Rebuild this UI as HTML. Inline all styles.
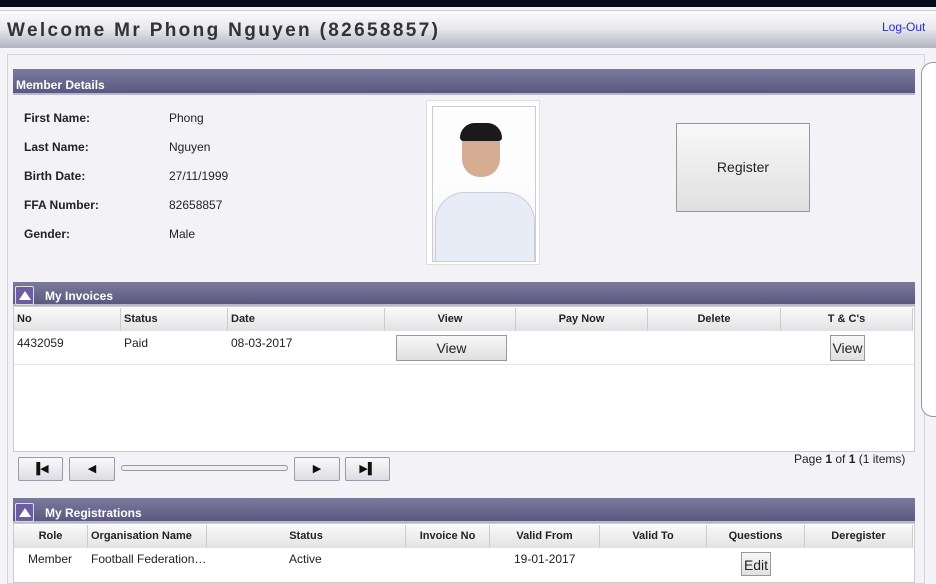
<!DOCTYPE html>
<html><head><style>
*{margin:0;padding:0;box-sizing:border-box}
body{width:936px;height:573px;overflow:hidden;background:#f4f4f8;font-family:"Liberation Sans",sans-serif;position:relative;font-size:12px;color:#222}
.a{position:absolute}
.bar{position:absolute;left:13px;width:902px;background:linear-gradient(#7c7a9c,#5a5880);color:#fff;font-weight:bold;font-size:12px;border-bottom:2px solid #b8b8cc}
.hd{position:absolute;height:23px;background:linear-gradient(#fafafa,#e2e2e6);border-right:1px solid #ccc;font-weight:bold;font-size:11px;line-height:22px;text-align:center}
.btn{position:absolute;background:linear-gradient(#f8f8f8,#e0e0e0);border:1px solid #999;text-align:center}
.pg{position:absolute;top:457px;height:24px;background:linear-gradient(#fafafa,#dcdce4);border:1px solid #9a9aa8;border-radius:2px;font-size:11px;text-align:center;line-height:22px;color:#111}
.ic{position:absolute;left:15px;width:19px;height:19px;border:1px solid #ddd;background:#6a5ea0;border-radius:2px}
.ic:after{content:"";position:absolute;left:3px;top:4px;border-left:6px solid transparent;border-right:6px solid transparent;border-bottom:9px solid #fff}
</style></head><body>
<div class="a" style="left:0;top:0;width:936px;height:7px;background:#050c1a"></div>
<div class="a" style="left:0;top:10px;width:936px;height:38px;background:linear-gradient(#fdfdfd,#e6e6ec 50%,#b2b2c2);border-top:1px solid #ccc"></div>
<div class="a" style="left:7px;top:20px;font-size:19px;font-weight:bold;letter-spacing:2.35px;color:#333">Welcome Mr Phong Nguyen (82658857)</div>
<div class="a" style="left:882px;top:20px;color:#2b2bd0;font-size:12px">Log-Out</div>
<div class="a" style="left:7px;top:54px;width:918px;height:530px;background:#f3f3f7;border:1px solid #d4d4dc"></div>
<div class="a" style="left:921px;top:62px;width:30px;height:355px;border:1px solid #999;border-radius:12px;background:#fff"></div>
<div class="bar" style="top:69px;height:26px;padding:9px 0 0 3px">Member Details</div>
<div class="a" style="left:24px;top:104px;font-weight:bold;line-height:29px">First Name:<br>Last Name:<br>Birth Date:<br>FFA Number:<br>Gender:</div>
<div class="a" style="left:169px;top:104px;line-height:29px">Phong<br>Nguyen<br>27/11/1999<br>82658857<br>Male</div>
<div class="a" style="left:426px;top:100px;width:114px;height:165px;background:#fff;border:1px solid #e0e0e0"></div>
<div class="a" style="left:432px;top:106px;width:104px;height:156px;background:linear-gradient(#fdfdfd 50%,#eef0f8);border:1px solid #ccc;overflow:hidden">
<div class="a" style="left:29px;top:20px;width:38px;height:50px;background:#d6ad92;border-radius:16px 16px 18px 18px"></div>
<div class="a" style="left:27px;top:16px;width:42px;height:18px;background:#1a1a1a;border-radius:18px 18px 4px 4px"></div>
<div class="a" style="left:2px;top:85px;width:100px;height:80px;background:#e8ecf6;border-radius:30px 30px 0 0;border:1px solid #ccd"></div>
</div>
<div class="btn" style="left:676px;top:123px;width:134px;height:89px;line-height:87px;font-size:14px">Register</div>
<div class="bar" style="top:282px;height:24px;padding:7px 0 0 32px">My Invoices</div>
<div class="ic" style="top:286px"></div>
<div class="a" style="left:13px;top:306px;width:902px;height:146px;background:#fff;border:1px solid #ccc"></div>
<div class="hd" style="left:14px;top:308px;width:107px;text-align:left;padding-left:3px">No</div>
<div class="hd" style="left:121px;top:308px;width:107px;text-align:left;padding-left:3px">Status</div>
<div class="hd" style="left:228px;top:308px;width:157px;text-align:left;padding-left:3px">Date</div>
<div class="hd" style="left:385px;top:308px;width:131px">View</div>
<div class="hd" style="left:516px;top:308px;width:132px">Pay Now</div>
<div class="hd" style="left:648px;top:308px;width:133px">Delete</div>
<div class="hd" style="left:781px;top:308px;width:132px">T &amp; C's</div>
<div class="a" style="left:14px;top:364px;width:900px;height:1px;background:#e6e6e6"></div>
<div class="a" style="left:17px;top:336px">4432059</div>
<div class="a" style="left:124px;top:336px">Paid</div>
<div class="a" style="left:231px;top:336px">08-03-2017</div>
<div class="btn" style="left:396px;top:335px;width:111px;height:26px;line-height:24px;font-size:14px">View</div>
<div class="btn" style="left:830px;top:335px;width:35px;height:26px;line-height:24px;font-size:14px">View</div>
<div class="pg" style="left:18px;width:45px">▐◀</div>
<div class="pg" style="left:69px;width:46px">◀</div>
<div class="a" style="left:121px;top:465px;width:167px;height:6px;border:1px solid #999;border-radius:3px;background:#eee"></div>
<div class="pg" style="left:294px;width:46px">▶</div>
<div class="pg" style="left:345px;width:45px">▶▌</div>
<div class="a" style="left:794px;top:452px;font-size:12px">Page <b>1</b> of <b>1</b> (1 items)</div>
<div class="bar" style="top:498px;height:25px;padding:8px 0 0 32px">My Registrations</div>
<div class="ic" style="top:503px"></div>
<div class="a" style="left:13px;top:523px;width:902px;height:60px;background:#fff;border:1px solid #ccc"></div>
<div class="hd" style="left:14px;top:525px;width:74px">Role</div>
<div class="hd" style="left:88px;top:525px;width:119px;text-align:left;padding-left:3px">Organisation Name</div>
<div class="hd" style="left:207px;top:525px;width:199px">Status</div>
<div class="hd" style="left:406px;top:525px;width:84px">Invoice No</div>
<div class="hd" style="left:490px;top:525px;width:110px">Valid From</div>
<div class="hd" style="left:600px;top:525px;width:107px">Valid To</div>
<div class="hd" style="left:707px;top:525px;width:98px">Questions</div>
<div class="hd" style="left:805px;top:525px;width:108px">Deregister</div>
<div class="a" style="left:28px;top:552px">Member</div>
<div class="a" style="left:91px;top:552px">Football Federation…</div>
<div class="a" style="left:289px;top:552px">Active</div>
<div class="a" style="left:514px;top:552px">19-01-2017</div>
<div class="btn" style="left:741px;top:552px;width:30px;height:24px;line-height:24px;font-size:14px">Edit</div>
</body></html>
